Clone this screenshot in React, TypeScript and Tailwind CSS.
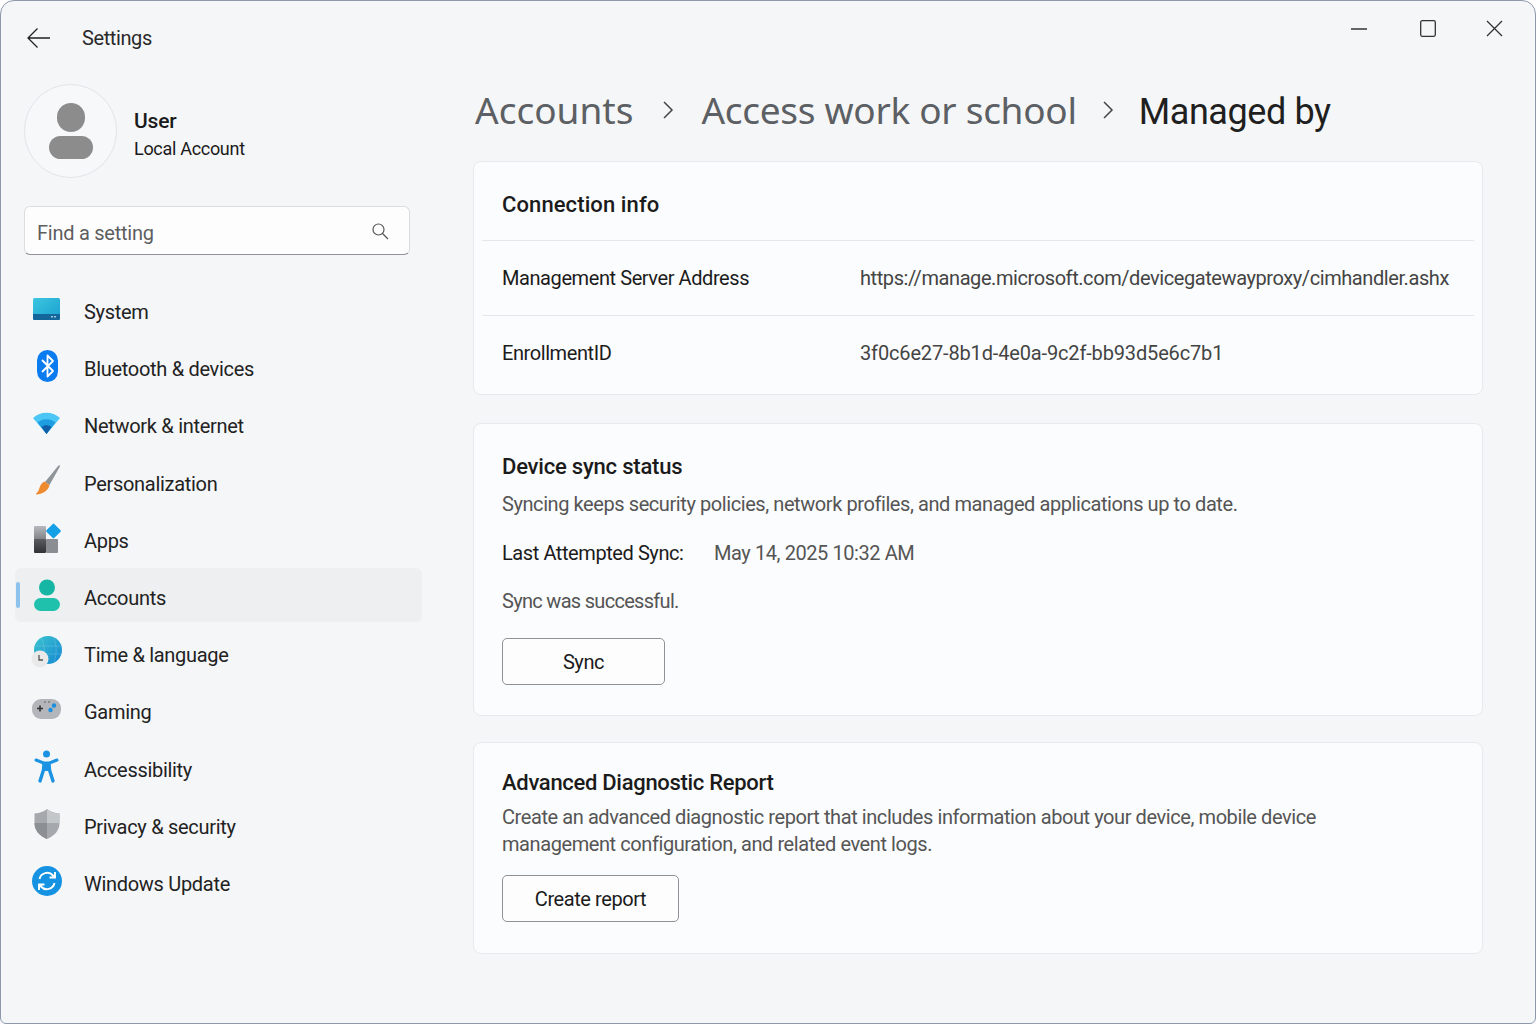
import { ReactNode } from 'react';

const navItems: { label: string; icon: ReactNode }[] = [
  {
    label: 'System',
    icon: (
      <svg width="30" height="26" viewBox="0 0 30 26">
        <defs>
          <linearGradient id="sys" x1="0" y1="0" x2="1" y2="1">
            <stop offset="0" stopColor="#3cc6e0" />
            <stop offset="1" stopColor="#1a9fcf" />
          </linearGradient>
        </defs>
        <rect x="1" y="2" width="27" height="22" rx="1.5" fill="url(#sys)" />
        <path d="M1 18h27v4.500a1.500 1.500 0 0 1-1.500 1.500h-24a1.500 1.500 0 0 1-1.500-1.500z" fill="#14659a" />
        <rect x="19" y="20" width="2" height="1.500" fill="#9cc7dd" />
        <rect x="22" y="20" width="2" height="1.500" fill="#9cc7dd" />
      </svg>
    ),
  },
  {
    label: 'Bluetooth & devices',
    icon: (
      <svg width="30" height="34" viewBox="0 0 30 34">
        <rect x="5" y="1" width="21" height="32" rx="10.500" fill="#0b7cf0" />
        <path d="M10 11l11 11-5.500 5.500v-21L21 12 10 23" fill="none" stroke="#fff" strokeWidth="1.800" strokeLinejoin="round" />
      </svg>
    ),
  },
  {
    label: 'Network & internet',
    icon: (
      <svg width="30" height="26" viewBox="0 0 30 26">
        <path d="M1 8C8.500 1 20.500 1 28 8L14.500 24z" fill="#4cc6f4" />
        <path d="M5.500 12.500C10.500 8 18.500 8 23.500 12.500L14.500 24z" fill="#1e9ee0" />
        <path d="M9.500 17C12.500 14.500 16.500 14.500 19.500 17L14.500 24z" fill="#0f5fa8" />
      </svg>
    ),
  },
  {
    label: 'Personalization',
    icon: (
      <svg width="30" height="34" viewBox="0 0 30 34">
        <path d="M26.500 1.500c1-.6 1.800.2 1.300 1.300L17.500 21l-4.500-3z" fill="#8f9499" />
        <path d="M12.500 17.500l5 3.500c-.8 4.500-5 8.500-12.500 9.500-1 0-1.300-.8-.6-1.300 2.600-1.800 2.600-4.200 3.600-6.700 1-2.500 2.500-4 4.500-5z" fill="#ef8a2e" />
      </svg>
    ),
  },
  {
    label: 'Apps',
    icon: (
      <svg width="30" height="32" viewBox="0 0 30 32">
        <defs>
          <linearGradient id="appsTop" x1="0" y1="0" x2="0" y2="1">
            <stop offset="0" stopColor="#b6b9bd" />
            <stop offset="1" stopColor="#7d8186" />
          </linearGradient>
          <linearGradient id="appsDark" x1="0" y1="0" x2="0" y2="1">
            <stop offset="0" stopColor="#5a5d60" />
            <stop offset="1" stopColor="#2f3133" />
          </linearGradient>
        </defs>
        <rect x="2" y="4" width="12" height="14" rx="1" fill="url(#appsTop)" />
        <rect x="2" y="17" width="12" height="14" rx="1" fill="url(#appsDark)" />
        <rect x="14" y="17" width="12" height="14" rx="1" fill="#8a8e93" />
        <rect x="16" y="3.500" width="11" height="11" rx="1" transform="rotate(45 21.500 9)" fill="#149fe6" />
      </svg>
    ),
  },
  {
    label: 'Accounts',
    icon: (
      <svg width="30" height="34" viewBox="0 0 30 34">
        <circle cx="15" cy="9.500" r="8" fill="#16b6a5" />
        <rect x="2" y="20" width="26" height="13" rx="6.500" fill="#1fc0ac" />
      </svg>
    ),
  },
  {
    label: 'Time & language',
    icon: (
      <svg width="32" height="34" viewBox="0 0 32 34">
        <defs>
          <linearGradient id="globe" x1="0" y1="0" x2="1" y2="1">
            <stop offset="0" stopColor="#3cc4cf" />
            <stop offset="1" stopColor="#1487d2" />
          </linearGradient>
        </defs>
        <circle cx="17" cy="15" r="14" fill="url(#globe)" />
        <path d="M10 3c4 6 4 16 2 24M22 2c4 6 4 18 1 25M4 11h26M4 19h26" fill="none" stroke="#fff" strokeOpacity=".2" strokeWidth=".8" />
        <circle cx="9" cy="24" r="8.500" fill="#e9e9ea" />
        <path d="M8 20v5h4" fill="none" stroke="#555" strokeWidth="1.300" />
      </svg>
    ),
  },
  {
    label: 'Gaming',
    icon: (
      <svg width="32" height="24" viewBox="0 0 32 24">
        <rect x="1" y="2" width="29" height="20" rx="9" fill="#b2b5ba" />
        <path d="M6 11.500h6M9 8.500v6" stroke="#333" strokeWidth="1.600" />
        <circle cx="23" cy="8.500" r="2.200" fill="#1a8fe0" />
        <circle cx="19.500" cy="13" r="2.200" fill="#1a8fe0" />
        <circle cx="14" cy="5" r=".7" fill="#444" />
        <circle cx="18" cy="5" r=".7" fill="#444" />
      </svg>
    ),
  },
  {
    label: 'Accessibility',
    icon: (
      <svg width="30" height="34" viewBox="0 0 30 34">
        <circle cx="14.500" cy="4" r="3.500" fill="#1b93e2" />
        <path d="M4 10l7.500 3h6l7.500-3" fill="none" stroke="#1b93e2" strokeWidth="3" strokeLinecap="round" strokeLinejoin="round" />
        <path d="M12 14l-.5 6L8 31M17 14l.5 6L21 31" fill="none" stroke="#1b93e2" strokeWidth="3.400" strokeLinecap="round" />
        <path d="M11 12h7v9h-7z" fill="#1b93e2" />
      </svg>
    ),
  },
  {
    label: 'Privacy & security',
    icon: (
      <svg width="30" height="32" viewBox="0 0 30 32">
        <path d="M15 1c3 2.500 7 4 12.500 4.500v9.500c0 7.500-5 13-12.500 16C7.500 28 2.500 22.500 2.500 15V5.500C8 5 12 3.500 15 1z" fill="#a5a9ad" />
        <path d="M15 1c3 2.500 7 4 12.500 4.500V15H15z" fill="#c4c7ca" />
        <path d="M15 15v16C7.500 28 2.500 22.500 2.500 15z" fill="#8c9094" />
      </svg>
    ),
  },
  {
    label: 'Windows Update',
    icon: (
      <svg width="32" height="34" viewBox="0 0 32 34">
        <circle cx="16" cy="17" r="15" fill="#1593e2" />
        <path d="M8.500 15a7.800 7.800 0 0 1 13.500-3.500l1.500 1.500M24 8v5.500h-5.500M23.500 19a7.800 7.800 0 0 1-13.500 3.500L8.500 21M8 26v-5.500h5.500" fill="none" stroke="#fff" strokeWidth="1.900" />
      </svg>
    ),
  },
];

function Card({ children, className }: { children: ReactNode; className: string }) {
  return <div className={`rounded-lg border border-[#e8e9ec] bg-[#fbfcfd] ${className}`}>{children}</div>;
}

export default function App() {
  return (
    <div className="relative flex h-[1024px] w-[1536px] overflow-hidden rounded-t-[14px] rounded-b-[6px] border border-[#8d99ab] bg-[#f5f6f8] font-['Roboto',sans-serif] text-[#1b1b1b]">
      <aside className="flex w-[472px] shrink-0 flex-col">
        <div className="flex h-[83px] items-start pt-[26px] pl-[25px]">
          <svg width="24" height="22" viewBox="0 0 24 22" fill="none" stroke="#222" strokeWidth="1.300">
            <path d="M24 11H2M11.500 1.500L2 11l9.500 9.500" />
          </svg>
          <span className="mt-[-4px] ml-[32px] text-[20px] tracking-[-0.4px] text-[#2a2a2a]">Settings</span>
        </div>
        <div className="ml-[23px] flex items-center">
          <div className="flex h-[94px] w-[93px] flex-col items-center justify-center rounded-full border border-[#e3e4e7] bg-[#f7f8fa]">
            <div className="h-[29px] w-[28px] rounded-full bg-[#8c8c8c]" />
            <div className="mt-[4px] h-[23px] w-[44px] rounded-full bg-[#8c8c8c]" />
          </div>
          <div className="mt-[5px] ml-[17px] flex flex-col">
            <span className="text-[21px] leading-[29px] font-medium tracking-[-0.2px]">User</span>
            <span className="text-[18px] leading-[25px] tracking-[-0.3px]">Local Account</span>
          </div>
        </div>
        <div className="mt-[28px] ml-[23px] flex h-[49px] w-[386px] items-center justify-between rounded-md border border-[#dcdde0] border-b-[#8f9194] bg-[#fdfdfe] pr-[20px] pl-[12px]">
          <span className="mt-[5px] text-[20px] tracking-[-0.25px] text-[#5e5e5e]">Find a setting</span>
          <svg width="18" height="18" viewBox="0 0 18 18" fill="none" stroke="#555" strokeWidth="1.200">
            <circle cx="7.500" cy="7.500" r="5.500" />
            <path d="M11.500 11.500L17 17" />
          </svg>
        </div>
        <nav className="mt-[30px] ml-[14px] flex w-[407px] flex-col gap-[3.200px]">
          {navItems.map((item) => {
            const active = item.label === 'Accounts';
            return (
              <div
                key={item.label}
                className={`relative flex h-[54px] items-center rounded-md ${active ? 'mt-[-3px] mb-[3px] bg-[#eeeff1] pt-[6px]' : ''}`}
              >
                {active && <div className="absolute top-[14px] left-[1px] h-[26px] w-[4px] rounded-full bg-[#8cc2ec]" />}
                <div className="mb-[6px] flex w-[69px] justify-center pr-[5px]">{item.icon}</div>
                <span className="text-[20px] tracking-[-0.3px] text-[#222]">{item.label}</span>
              </div>
            );
          })}
        </nav>
      </aside>
      <main className="flex w-[1010px] flex-col">
        <div className="flex h-[160px] items-center pt-[58px] font-['Noto_Sans',sans-serif] text-[37px]">
          <span className="pl-[2px] text-[#5c5f63]">Accounts</span>
          <svg className="mr-[26px] ml-[28px]" width="14" height="22" viewBox="0 0 14 22" fill="none" stroke="#444" strokeWidth="1.500">
            <path d="M3 3l8 8-8 8" />
          </svg>
          <span className="tracking-[-0.28px] text-[#5c5f63]">Access work or school</span>
          <svg className="mx-[24px]" width="14" height="22" viewBox="0 0 14 22" fill="none" stroke="#444" strokeWidth="1.500">
            <path d="M3 3l8 8-8 8" />
          </svg>
          <span className="mt-[3px] font-['Roboto',sans-serif] text-[36px] tracking-[-0.4px] text-[#1f1f1f]">Managed by</span>
        </div>
        <Card className="h-[234px] px-[8px]">
          <div className="flex h-[78px] items-center px-[20px] pt-[6px] text-[22px] font-medium tracking-[0.1px]">Connection info</div>
          <div className="flex h-[75px] items-center border-t border-[#e5e6e9] px-[20px] text-[20px] tracking-[-0.42px]">
            <span className="w-[358px] shrink-0">Management Server Address</span>
            <span className="text-[#444]">https://manage.microsoft.com/devicegatewayproxy/cimhandler.ashx</span>
          </div>
          <div className="flex h-[78px] items-center border-t border-[#e5e6e9] px-[20px] pb-[4px] text-[20px] tracking-[-0.42px]">
            <span className="w-[358px] shrink-0">EnrollmentID</span>
            <span className="tracking-[-0.15px] text-[#444]">3f0c6e27-8b1d-4e0a-9c2f-bb93d5e6c7b1</span>
          </div>
        </Card>
        <Card className="mt-[28px] h-[293px] px-[28px] pt-[28px]">
          <div className="text-[22px] leading-[30px] font-medium tracking-[-0.2px]">Device sync status</div>
          <div className="mt-[7px] text-[20px] leading-[30px] tracking-[-0.42px] text-[#555]">
            Syncing keeps security policies, network profiles, and managed applications up to date.
          </div>
          <div className="mt-[19px] flex text-[20px] leading-[30px] tracking-[-0.42px]">
            <span className="w-[212px]">Last Attempted Sync:</span>
            <span className="text-[#555]">May 14, 2025 10:32 AM</span>
          </div>
          <div className="mt-[18px] text-[20px] leading-[30px] tracking-[-0.7px] text-[#555]">Sync was successful.</div>
          <button className="mt-[22px] h-[47px] w-[163px] rounded-[5px] border border-[#8f9194] bg-[#fdfdfe] text-[20px] tracking-[-0.42px]">Sync</button>
        </Card>
        <Card className="mt-[26px] h-[212px] px-[28px] pt-[25px]">
          <div className="text-[22px] leading-[30px] font-medium tracking-[-0.3px]">Advanced Diagnostic Report</div>
          <div className="mt-[6px] text-[20px] leading-[27px] tracking-[-0.42px] text-[#555]">
            Create an advanced diagnostic report that includes information about your device, mobile device
            <br />
            management configuration, and related event logs.
          </div>
          <button className="mt-[17px] h-[47px] w-[177px] rounded-[5px] border border-[#8f9194] bg-[#fdfdfe] text-[20px] tracking-[-0.42px]">Create report</button>
        </Card>
      </main>
      <div className="absolute top-[19px] right-[32px] flex items-center">
        <svg width="16" height="2" viewBox="0 0 16 2"><path d="M0 1h16" stroke="#333" strokeWidth="1.300" /></svg>
        <svg className="ml-[53px]" width="16" height="17" viewBox="0 0 16 17" fill="none" stroke="#333" strokeWidth="1.300"><rect x=".7" y=".7" width="14.600" height="15.600" rx="1.500" /></svg>
        <svg className="ml-[50px]" width="17" height="17" viewBox="0 0 17 17" fill="none" stroke="#333" strokeWidth="1.300"><path d="M1 1l15 15M16 1L1 16" /></svg>
      </div>
    </div>
  );
}
